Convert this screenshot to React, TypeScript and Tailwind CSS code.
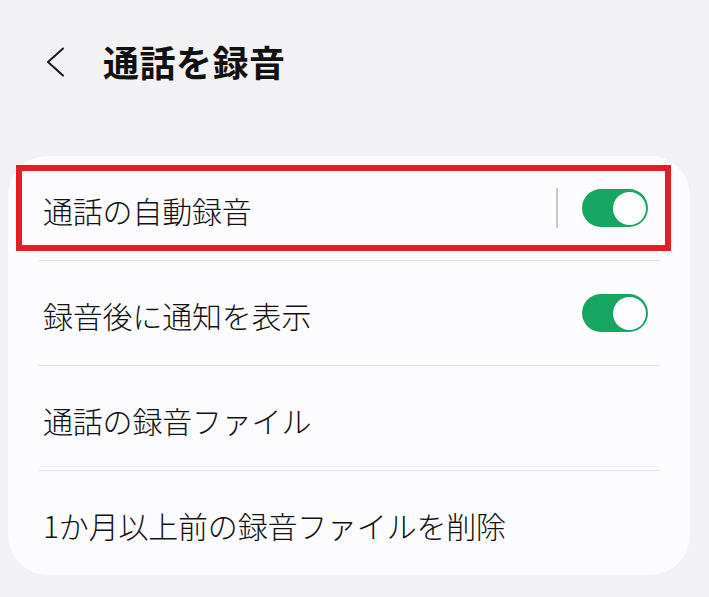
import React from "react";

function Toggle() {
  return (
    <div className="w-[66px] h-[38px] rounded-full bg-[#17a661] flex items-center justify-end pr-[2px]">
      <div className="w-[33px] h-[33px] rounded-full bg-[#fdfdff]" />
    </div>
  );
}

function Row({ label, toggle, vdivider }: { label: string; toggle?: boolean; vdivider?: boolean }) {
  return (
    <div className="h-[104px] flex items-center pl-[35px] pr-[42px]">
      <span className="flex-1 text-[30px] font-light text-[#111] leading-none tracking-[-0.2px] pt-[3px]">{label}</span>
      {vdivider && <div className="w-[2px] h-[40px] bg-[#c9c9cc] mr-[24px]" />}
      {toggle && <Toggle />}
    </div>
  );
}

function Divider() {
  return <div className="mx-[30px] h-[1px] bg-[#e2e2e6]" />;
}

export default function App() {
  return (
    <div
      className="relative w-[709px] h-[597px] bg-[#f2f2f4] overflow-hidden"
      style={{ fontFamily: '"Noto Sans CJK JP", "Noto Sans", sans-serif' }}
    >
      <div className="h-[122px] flex items-center pl-[45px]">
        <svg width="20" height="30" viewBox="0 0 20 30" fill="none" className="mt-[2px]">
          <path d="M18 1.5 L3 15 L18 28.5" stroke="#1a1a1a" strokeWidth="2" strokeLinecap="round" strokeLinejoin="round" />
        </svg>
        <h1 className="ml-[38px] text-[36px] font-bold text-[#111] leading-none tracking-[0.5px]">通話を録音</h1>
      </div>
      <div className="mt-[34px] ml-[8px] w-[682px] rounded-[40px] bg-[#fcfcfe]">
        <Row label="通話の自動録音" toggle vdivider />
        <Divider />
        <Row label="録音後に通知を表示" toggle />
        <Divider />
        <Row label="通話の録音ファイル" />
        <Divider />
        <Row label="1か月以上前の録音ファイルを削除" />
      </div>
      <div className="absolute left-[16px] top-[165px] w-[655px] h-[86px] border-[6px] border-[#e31c25]" />
    </div>
  );
}
